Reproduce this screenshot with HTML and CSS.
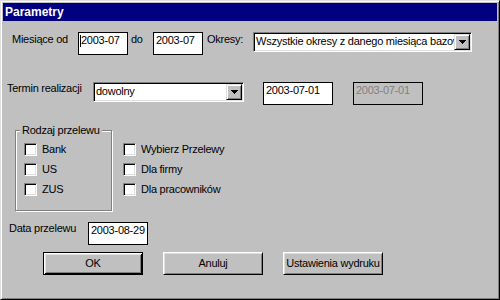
FILE: index.html
```html
<!DOCTYPE html>
<html lang="pl">
<head>
    <meta charset="UTF-8">
    <title>Parametry</title>
    <link rel="stylesheet" href="styles.css">
</head>
<body>
    <div class="window">
        <div class="titlebar">Parametry</div>

        <div class="row row-months">
            <span class="label lbl-od">Miesiące od</span>
            <div class="edit w50 edit-focus"><span class="caret"></span>2003-07</div>
            <span class="label lbl-do">do</span>
            <div class="edit w50">2003-07</div>
            <span class="label lbl-okresy">Okresy:</span>
            <div class="combo combo-okresy">
                <span class="combo-text">Wszystkie okresy z danego miesiąca bazowego</span>
                <span class="combo-btn"><svg width="7" height="4" shape-rendering="crispEdges"><rect x="0" y="0" width="7" height="1"/><rect x="1" y="1" width="5" height="1"/><rect x="2" y="2" width="3" height="1"/><rect x="3" y="3" width="1" height="1"/></svg></span>
            </div>
        </div>

        <div class="row row-termin">
            <span class="label lbl-termin">Termin realizacji</span>
            <div class="combo combo-termin">
                <span class="combo-text">dowolny</span>
                <span class="combo-btn"><svg width="7" height="4" shape-rendering="crispEdges"><rect x="0" y="0" width="7" height="1"/><rect x="1" y="1" width="5" height="1"/><rect x="2" y="2" width="3" height="1"/><rect x="3" y="3" width="1" height="1"/></svg></span>
            </div>
            <div class="edit w70 gap-l">2003-07-01</div>
            <div class="edit w70 gap-l2 disabled">2003-07-01</div>
        </div>

        <div class="row row-group">
            <fieldset class="group">
                <legend>Rodzaj przelewu</legend>
                <div class="checks">
                    <div class="check"><span class="box"></span><span>Bank</span></div>
                    <div class="check"><span class="box"></span><span>US</span></div>
                    <div class="check"><span class="box"></span><span>ZUS</span></div>
                </div>
            </fieldset>
            <div class="checks checks-right">
                <div class="check"><span class="box"></span><span>Wybierz Przelewy</span></div>
                <div class="check"><span class="box"></span><span>Dla firmy</span></div>
                <div class="check"><span class="box"></span><span>Dla pracowników</span></div>
            </div>
        </div>

        <div class="row row-data">
            <span class="label lbl-data">Data przelewu</span>
            <div class="edit w60">2003-08-29</div>
        </div>

        <div class="row row-buttons">
            <button class="btn btn-default">OK</button>
            <button class="btn">Anuluj</button>
            <button class="btn">Ustawienia wydruku</button>
        </div>
    </div>
</body>
</html>
```

FILE: styles.css
```css
* { box-sizing: border-box; }
body { margin: 0; font-family: "Liberation Sans", Arial, sans-serif; font-size: 11px; line-height: 13px; letter-spacing: -0.25px; color: #000; background: #c0c0c0; }

/* okno w stylu Win95 */
.window { width: 500px; height: 300px; background: #c0c0c0; border: 1px solid; border-color: #dfdfdf #000 #000 #dfdfdf; box-shadow: inset 1px 1px #fff, inset -1px -1px #808080; padding: 2px; }
.titlebar { height: 18px; line-height: 18px; background: #000080; color: #fff; font-weight: bold; font-size: 12px; letter-spacing: 0; padding-left: 2px; }

.row { display: flex; align-items: flex-start; }
.label { white-space: nowrap; }

.edit { height: 23px; border: 1px solid #000; background: #fff; padding: 1px 2px; white-space: nowrap; overflow: hidden; }
.edit-focus { padding-left: 1px; }
.caret { display: inline-block; width: 1px; height: 12px; background: #000; vertical-align: top; margin-top: 1px; }
.disabled { background: #c0c0c0; color: #808080; }
.w50 { width: 50px; }
.w60 { width: 60px; }
.w70 { width: 70px; }

.combo { display: flex; height: 20px; border: 1px solid; border-color: #808080 #fff #fff #808080; box-shadow: inset 1px 1px #000, inset -1px -1px #dfdfdf; background: #fff; padding: 1px; }
.combo-text { flex: 1; overflow: hidden; white-space: nowrap; padding: 1px 0 0 1px; }
.combo-btn { width: 16px; height: 16px; flex: none; display: flex; align-items: center; justify-content: center; background: #c0c0c0; border: 1px solid; border-color: #dfdfdf #000 #000 #dfdfdf; box-shadow: inset 1px 1px #fff, inset -1px -1px #808080; }

.row-months { margin-top: 11px; padding-left: 9px; }
.lbl-od { width: 66px; padding-top: 1px; }
.lbl-do { width: 22px; margin-left: 3px; padding-top: 1px; }
.lbl-okresy { width: 46px; margin-left: 4px; padding-top: 1px; }
.combo-okresy { width: 219px; }

.row-termin { margin-top: 27px; padding-left: 4px; }
.lbl-termin { width: 86px; }
.combo-termin { width: 151px; }
.gap-l { margin-left: 19px; }
.gap-l2 { margin-left: 20px; }

.row-group { margin-top: 19px; padding-left: 12px; }
.group { width: 97px; margin: 0; padding: 6px 0 14px 0; border: 1px solid #808080; box-shadow: inset 1px 1px #fff, 1px 1px #fff; }
.group legend { margin-left: 4px; padding: 0 2px; background: #c0c0c0; line-height: 13px; }
.checks { display: flex; flex-direction: column; gap: 7px; margin-left: 8px; }
.checks-right { margin-left: 11px; margin-top: 19px; }
.check { display: flex; height: 13px; align-items: flex-start; white-space: nowrap; }
.box { width: 13px; height: 13px; flex: none; margin-right: 5px; background: #fff; border: 1px solid; border-color: #808080 #fff #fff #808080; box-shadow: inset 1px 1px #000, inset -1px -1px #dfdfdf; }

.row-data { margin-top: 11px; padding-left: 6px; }
.lbl-data { width: 79px; }

.row-buttons { margin-top: 7px; padding-left: 40px; gap: 20px; }
.btn { width: 100px; height: 23px; padding: 0; font: inherit; letter-spacing: inherit; color: #000; background: #c0c0c0; border: 1px solid; border-color: #fff #000 #000 #fff; box-shadow: inset 1px 1px #dfdfdf, inset -1px -1px #808080; white-space: nowrap; }
.btn-default { border-color: #000; box-shadow: inset 1px 1px #fff, inset -1px -1px #000, inset 2px 2px #dfdfdf, inset -2px -2px #808080; }
```
